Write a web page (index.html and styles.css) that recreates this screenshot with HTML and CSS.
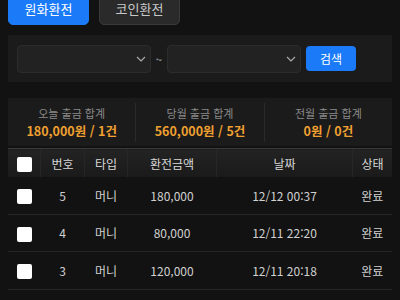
FILE: index.html
```html
<!DOCTYPE html>
<html lang="ko">
<head>
    <meta charset="UTF-8">
    <meta name="viewport" content="width=device-width, initial-scale=1.0">
    <title>환전 내역</title>
    <link rel="stylesheet" href="styles.css">
</head>
<body>

<div class="page">
    <div class="tabs">
        <button class="tab active">원화환전</button>
        <button class="tab">코인환전</button>
    </div>

    <div class="search-box">
        <div class="select">
            <svg width="10" height="6" viewBox="0 0 10 6"><path d="M1 1l4 4 4-4" fill="none" stroke="#aaa" stroke-width="1.2"/></svg>
        </div>
        <span class="tilde">~</span>
        <div class="select">
            <svg width="10" height="6" viewBox="0 0 10 6"><path d="M1 1l4 4 4-4" fill="none" stroke="#aaa" stroke-width="1.2"/></svg>
        </div>
        <button class="search-btn">검색</button>
    </div>

    <div class="summary">
        <div class="summary-item">
            <div class="label">오늘 출금 합계</div>
            <div class="value">180,000원 / 1건</div>
        </div>
        <div class="summary-item">
            <div class="label">당월 출금 합계</div>
            <div class="value">560,000원 / 5건</div>
        </div>
        <div class="summary-item">
            <div class="label">전월 출금 합계</div>
            <div class="value">0원 / 0건</div>
        </div>
    </div>

    <table class="list">
        <thead>
            <tr>
                <th><span class="check"></span></th>
                <th>번호</th>
                <th>타입</th>
                <th>환전금액</th>
                <th>날짜</th>
                <th>상태</th>
            </tr>
        </thead>
        <tbody>
            <tr>
                <td><span class="check"></span></td>
                <td>5</td>
                <td>머니</td>
                <td>180,000</td>
                <td>12/12 00:37</td>
                <td>완료</td>
            </tr>
            <tr>
                <td><span class="check"></span></td>
                <td>4</td>
                <td>머니</td>
                <td>80,000</td>
                <td>12/11 22:20</td>
                <td>완료</td>
            </tr>
            <tr>
                <td><span class="check"></span></td>
                <td>3</td>
                <td>머니</td>
                <td>120,000</td>
                <td>12/11 20:18</td>
                <td>완료</td>
            </tr>
        </tbody>
    </table>
</div>

</body>
</html>
```

FILE: styles.css
```css
body {
    margin: 0;
    background: #121212;
    color: #d8d8d8;
    font-family: "Noto Sans CJK KR", "Noto Sans", sans-serif;
    overflow: hidden;
}

.page {
    padding: 0 8px;
}

.tabs {
    display: flex;
    gap: 10px;
    margin-top: -8px;
}

.tab {
    width: 81px;
    height: 33px;
    border-radius: 5px;
    border: 1px solid #3a3a3a;
    background: #2a2a2a;
    color: #c8c8c8;
    font-family: inherit;
    font-size: 13px;
    padding: 0;
}

.tab.active {
    background: #1a7af8;
    border-color: #1a7af8;
    color: #fff;
}

.search-box {
    margin-top: 10px;
    height: 47px;
    background: #1b1b1b;
    display: flex;
    align-items: center;
    padding: 0 9px;
}

.select {
    width: 134px;
    height: 28px;
    box-sizing: border-box;
    background: #222;
    border: 1px solid #2c2c2c;
    border-radius: 4px;
    display: flex;
    align-items: center;
    justify-content: flex-end;
    padding-right: 4px;
}

.tilde {
    width: 16px;
    text-align: center;
    color: #bbb;
    font-size: 11px;
}

.search-btn {
    margin-left: 5px;
    width: 50px;
    height: 25px;
    border: none;
    border-radius: 4px;
    background: #1a7af8;
    color: #fff;
    font-family: inherit;
    font-size: 12px;
    padding: 0;
}

.summary {
    margin-top: 16px;
    height: 48px;
    background: #1b1b1b;
    display: flex;
    align-items: center;
}

.summary-item {
    flex: 1;
    text-align: center;
    border-left: 1px solid #2a2a2a;
    padding: 2px 0;
}

.summary-item:first-child {
    border-left: none;
}

.summary .label {
    font-size: 11px;
    color: #8a8a8a;
    line-height: 17px;
}

.summary .value {
    font-size: 12.5px;
    color: #f0a030;
    font-weight: 600;
    line-height: 18px;
}

.list {
    width: 100%;
    margin-top: 2px;
    border-collapse: collapse;
    font-size: 12px;
}

.list th {
    height: 28px;
    font-weight: normal;
    color: #d8d8d8;
    background: linear-gradient(#232323, #1a1a1a);
    border-top: 1px solid #3a3a3a;
    border-left: 1px solid #262626;
    padding: 0;
}

.list th:first-child {
    border-left: none;
}

.list td {
    height: 36.5px;
    text-align: center;
    border-bottom: 1px solid #262626;
    padding: 0;
    color: #d0d0d0;
}

.list th:nth-child(1), .list td:nth-child(1) { width: 32px; }
.list th:nth-child(2), .list td:nth-child(2) { width: 43px; }
.list th:nth-child(3), .list td:nth-child(3) { width: 42px; }
.list th:nth-child(4), .list td:nth-child(4) { width: 88px; }
.list th:nth-child(5), .list td:nth-child(5) { width: 135px; }

.check {
    display: inline-block;
    width: 15px;
    height: 15px;
    background: #fff;
    border-radius: 2px;
    vertical-align: middle;
}
```
